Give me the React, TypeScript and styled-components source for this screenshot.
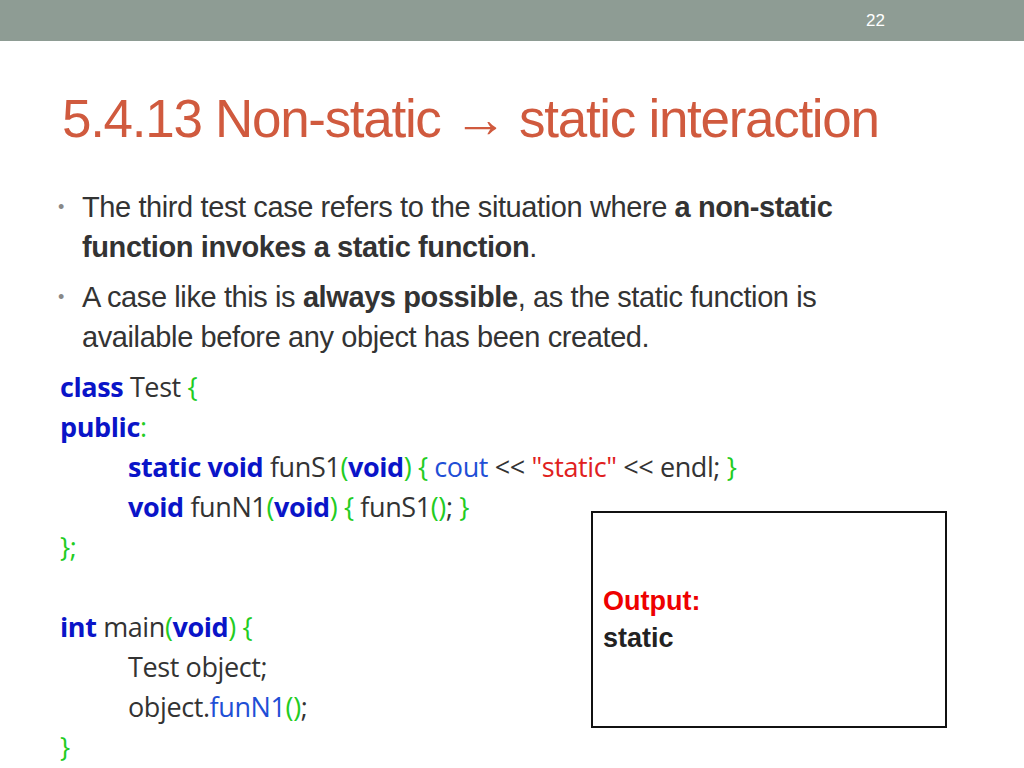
import React from 'react';
import styled, { createGlobalStyle } from 'styled-components';

const Global = createGlobalStyle`
  html, body { margin: 0; padding: 0; background: #fff; }
  body { width: 1024px; height: 768px; overflow: hidden; font-family: "Liberation Sans", Arial, sans-serif; }
`;

const Slide = styled.div`
  width: 1024px;
  height: 768px;
  position: relative;
`;

const TopBar = styled.div`
  height: 41px;
  background: #8e9c94;
  display: flex;
  align-items: center;
  justify-content: flex-end;
  padding-right: 139px;
  color: #fff;
  font-size: 17px;
`;

const Title = styled.h1`
  margin: 48px 0 0 62px;
  font-weight: normal;
  font-size: 53px;
  letter-spacing: -1.3px;
  color: #d05a3e;
  line-height: 60px;
  white-space: nowrap;
`;

const Bullets = styled.ul`
  list-style: none;
  margin: 38px 0 0 0;
  padding: 0 100px 0 82px;
  color: #333;
  font-size: 29px;
  letter-spacing: -0.4px;
  line-height: 40px;
`;

const Bullet = styled.li`
  position: relative;
  margin-bottom: 10px;
  &::before {
    content: '•';
    position: absolute;
    left: -24px;
    font-size: 18px;
    color: #888;
  }
`;

const Code = styled.div`
  margin: 6px 0 0 60px;
  font-family: "Open Sans", sans-serif;
  font-size: 27px;
  letter-spacing: -0.4px;
  line-height: 40px;
  color: #333;
  white-space: pre;
`;

const Line = styled.div<{ $indent?: boolean }>`
  height: 40px;
  padding-left: ${({ $indent }) => ($indent ? '68px' : '0')};
`;

const K = styled.b`color: #0a14c8; font-weight: 700;`;
const G = styled.span`color: #22cc22;`;
const B = styled.span`color: #1f4fd6;`;
const S = styled.span`color: #e02020;`;

const OutBox = styled.div`
  position: absolute;
  left: 591px;
  top: 511px;
  width: 342px;
  height: 213px;
  border: 2px solid #111;
  display: flex;
  flex-direction: column;
  justify-content: center;
  padding-left: 10px;
  font-weight: bold;
  font-size: 27px;
  line-height: 37px;
  color: #222;
`;

const Red = styled.div`color: #ee0000;`;

export default function App() {
  return (
    <Slide>
      <Global />
      <TopBar>22</TopBar>
      <Title>5.4.13 Non-static → static interaction</Title>
      <Bullets>
        <Bullet>
          The third test case refers to the situation where <b>a non-static function invokes a static function</b>.
        </Bullet>
        <Bullet>
          A case like this is <b>always possible</b>, as the static function is available before any object has been created.
        </Bullet>
      </Bullets>
      <Code>
        <Line><K>class</K> Test <G>{'{'}</G></Line>
        <Line><K>public</K><G>:</G></Line>
        <Line $indent><K>static void</K> funS1<G>(</G><K>void</K><G>)</G> <G>{'{'}</G> <B>cout</B> &lt;&lt; <S>"static"</S> &lt;&lt; endl; <G>{'}'}</G></Line>
        <Line $indent><K>void</K> funN1<G>(</G><K>void</K><G>)</G> <G>{'{'}</G> funS1<G>()</G>; <G>{'}'}</G></Line>
        <Line><G>{'};'}</G></Line>
        <Line />
        <Line><K>int</K> main<G>(</G><K>void</K><G>)</G> <G>{'{'}</G></Line>
        <Line $indent>Test object;</Line>
        <Line $indent>object.<B>funN1</B><G>()</G>;</Line>
        <Line><G>{'}'}</G></Line>
      </Code>
      <OutBox>
        <Red>Output:</Red>
        <div>static</div>
      </OutBox>
    </Slide>
  );
}
